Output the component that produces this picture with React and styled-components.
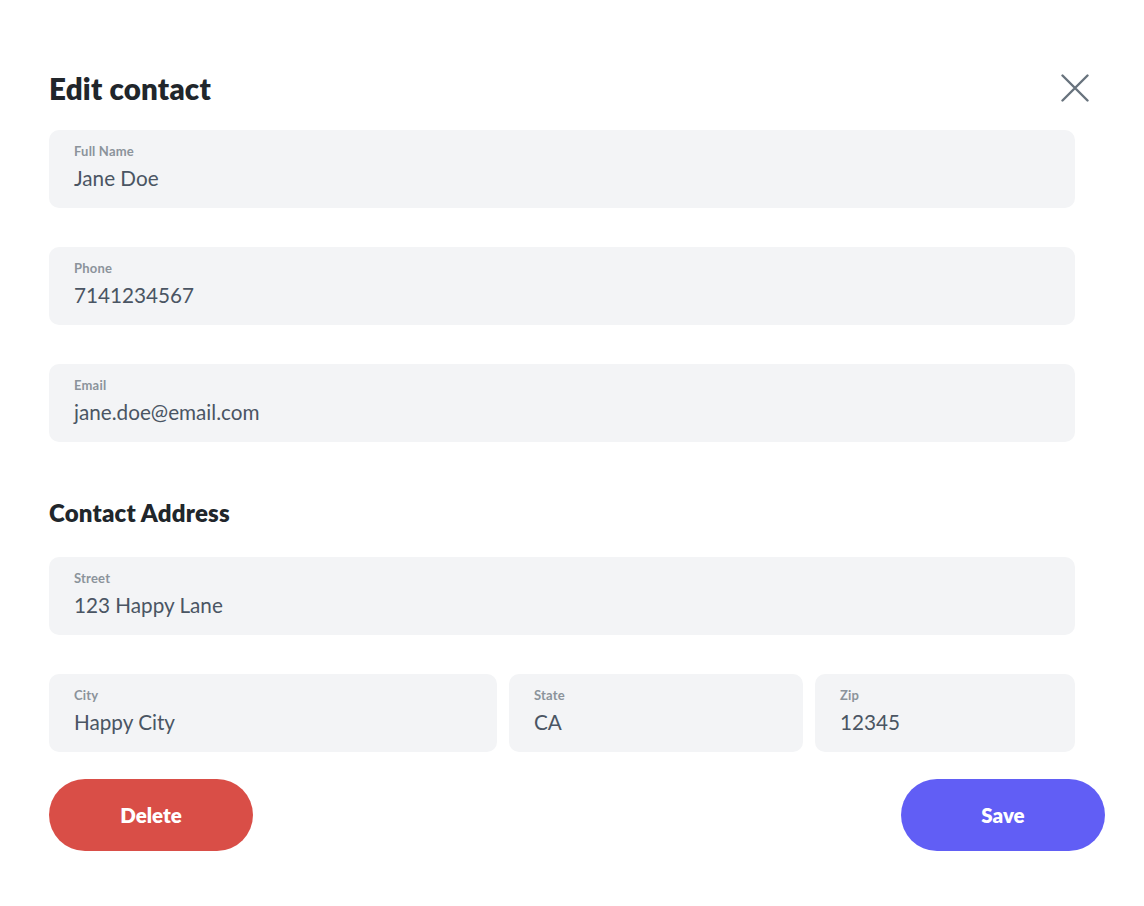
import React from "react";
import styled, { createGlobalStyle } from "styled-components";

const Global = createGlobalStyle`
  html, body { margin: 0; padding: 0; background: #ffffff; }
  body { font-family: Lato, "Noto Sans", sans-serif; -webkit-font-smoothing: antialiased; }
  * { box-sizing: border-box; }
`;

const Page = styled.div`
  width: 1144px;
  height: 906px;
  padding: 69px 0 0 49px;
  display: flex;
  flex-direction: column;
`;

const Header = styled.div`
  width: 1056px;
  height: 38px;
  display: flex;
  align-items: center;
  justify-content: space-between;
`;

const Title = styled.h1`
  margin: 0;
  font-size: 29.5px;
  font-weight: 800;
  color: #21262b;
  letter-spacing: 0.2px;
`;

const CloseButton = styled.button`
  width: 40px;
  height: 40px;
  margin-right: 10px;
  border: none;
  background: transparent;
  padding: 0;
  display: flex;
  align-items: center;
  justify-content: center;
  cursor: pointer;
`;

const Fields = styled.div`
  width: 1026px;
  margin-top: 23px;
  display: flex;
  flex-direction: column;
  gap: 39px;
`;

const Row = styled.div`
  display: flex;
  gap: 12px;
`;

const Field = styled.label`
  flex: none;
  width: ${(p) => (p.$w ? `${p.$w}px` : "100%")};
  height: 78px;
  background: #f3f4f6;
  border-radius: 10px;
  padding: 14px 26px 0 25px;
  display: flex;
  flex-direction: column;
`;

const Label = styled.span`
  font-size: 13px;
  font-weight: 700;
  color: #8b939b;
  line-height: 15px;
  letter-spacing: 0.2px;
`;

const Value = styled.span`
  margin-top: 6px;
  font-size: 20.7px;
  font-weight: 400;
  color: #4a5563;
  line-height: 26px;
`;

const Section = styled.h2`
  margin: 18px 0 -9px;
  font-size: 24px;
  font-weight: 800;
  color: #21262b;
  line-height: 28px;
  letter-spacing: 0.2px;
`;

const Actions = styled.div`
  width: 1056px;
  margin-top: 27px;
  display: flex;
  justify-content: space-between;
`;

const Button = styled.button`
  width: 204px;
  height: 72px;
  border: none;
  border-radius: 36px;
  background: ${(p) => p.$bg};
  color: #ffffff;
  font-family: Lato, "Noto Sans", sans-serif;
  font-size: 20.5px;
  font-weight: 800;
  cursor: pointer;
`;

const InputField = ({ label, value, w }) => (
  <Field $w={w}>
    <Label>{label}</Label>
    <Value>{value}</Value>
  </Field>
);

export default function App() {
  return (
    <>
      <Global />
      <Page>
        <Header>
          <Title>Edit contact</Title>
          <CloseButton aria-label="Close">
            <svg width="28" height="28" viewBox="0 0 28 28">
              <path d="M1.5 1.5 L26.5 26.5 M26.5 1.5 L1.5 26.5" stroke="#68737d" strokeWidth="2.4" strokeLinecap="round" />
            </svg>
          </CloseButton>
        </Header>
        <Fields>
          <InputField label="Full Name" value="Jane Doe" />
          <InputField label="Phone" value="7141234567" />
          <InputField label="Email" value="jane.doe@email.com" />
          <Section>Contact Address</Section>
          <InputField label="Street" value="123 Happy Lane" />
          <Row>
            <InputField label="City" value="Happy City" w={448} />
            <InputField label="State" value="CA" w={294} />
            <InputField label="Zip" value="12345" w={260} />
          </Row>
        </Fields>
        <Actions>
          <Button $bg="#d94e47">Delete</Button>
          <Button $bg="#615ef5">Save</Button>
        </Actions>
      </Page>
    </>
  );
}
